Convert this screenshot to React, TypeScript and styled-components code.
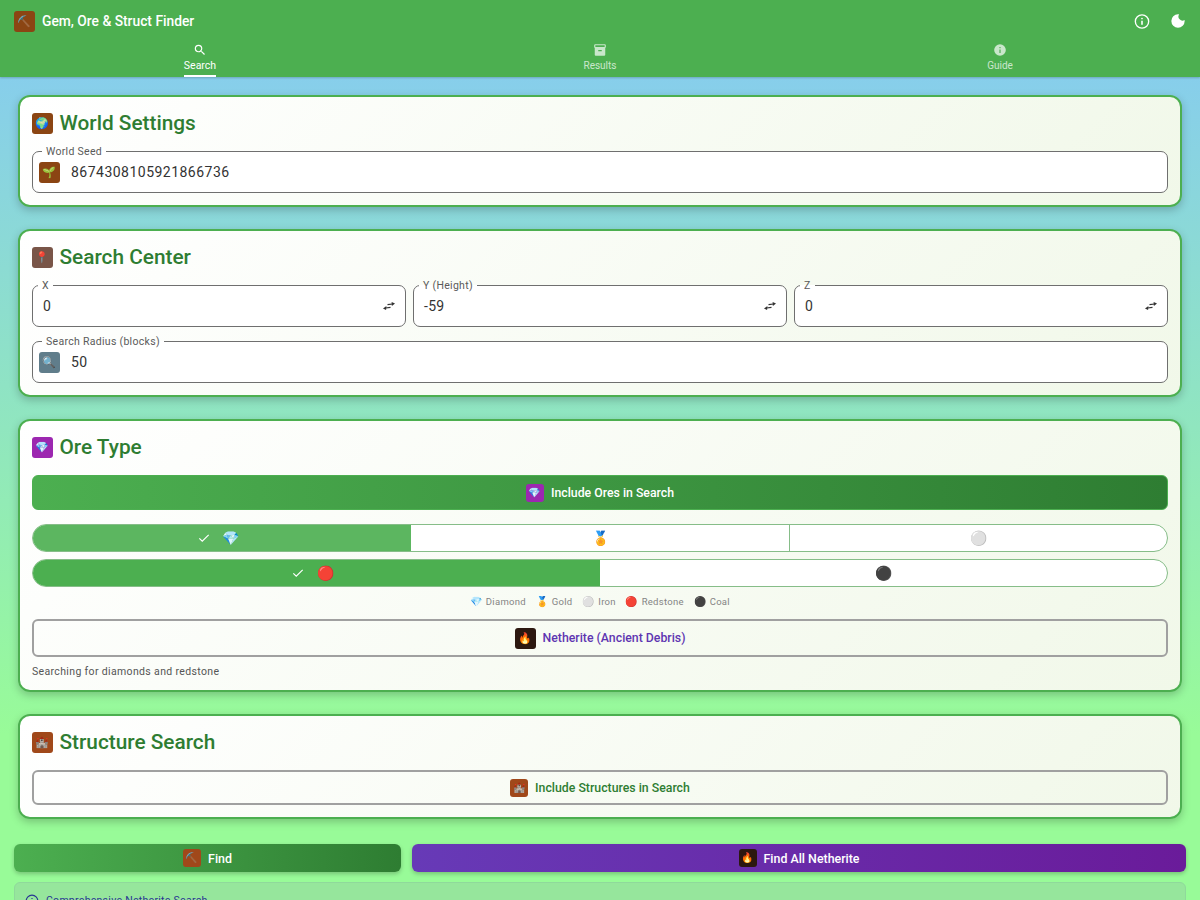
import React from "react";
import styled, { createGlobalStyle } from "styled-components";

const Global = createGlobalStyle`
  html, body { margin: 0; padding: 0; height: 900px; overflow: hidden; }
  body { font-family: Roboto, "Noto Sans", sans-serif; color: #212121; }
  * { box-sizing: border-box; }
`;

const Page = styled.div`
  display: flex;
  flex-direction: column;
  height: 900px;
  overflow: hidden;
`;

const Header = styled.header`
  background: #4caf50;
  height: 77px;
  flex: none;
  display: flex;
  flex-direction: column;
  box-shadow: 0 1px 2px rgba(0, 0, 0, 0.2);
  position: relative;
  z-index: 2;
`;

const TopBar = styled.div`
  height: 42px;
  flex: none;
  padding: 0 14px;
  display: flex;
  align-items: center;
  gap: 7px;
`;

const AppTitle = styled.div`
  flex: 1;
  color: #fff;
  font-size: 13.8px;
  font-weight: 500;
`;

const HeaderButton = styled.div`
  width: 16px;
  height: 16px;
  margin-left: 13px;
  display: flex;
  align-items: center;
  justify-content: center;
`;

const Tabs = styled.nav`
  flex: 1;
  display: grid;
  grid-template-columns: repeat(3, 1fr);
`;

const Tab = styled.div<{ $active?: boolean }>`
  display: flex;
  flex-direction: column;
  align-items: center;
  color: #fff;
  opacity: ${(p) => (p.$active ? 1 : 0.7)};
  font-size: ${(p) => (p.$active ? 10.5 : 10)}px;
  line-height: 12px;
  padding-top: 1px;
`;

const TabLabel = styled.span<{ $active?: boolean }>`
  margin-top: 3px;
  padding-bottom: 1px;
  height: 17px;
  border-bottom: 2px solid ${(p) => (p.$active ? "#fff" : "transparent")};
`;

const Main = styled.main`
  flex: 1;
  min-height: 0;
  overflow: hidden;
  padding: 18px 14px 0;
  background: linear-gradient(180deg, #87ceeb 0%, #98fb98 80%, #98fb98 100%);
`;

const Card = styled.section`
  margin: 0 4px 22.5px;
  padding: 12px 12px 11.5px;
  border: 2px solid #4caf50;
  border-radius: 12px;
  background: linear-gradient(135deg, #ffffff 0%, #f1f8e9 100%);
  box-shadow: 0 3px 8px rgba(0, 0, 0, 0.22);
`;

const CardTitle = styled.h2`
  margin: 0 0 14px;
  display: flex;
  align-items: center;
  gap: 6.5px;
  height: 28px;
  font-size: 20.8px;
  font-weight: 500;
  color: #2e7d32;
`;

const Emoji = styled.span<{ $bg: string; $size?: number }>`
  flex: none;
  width: ${(p) => p.$size ?? 21}px;
  height: ${(p) => p.$size ?? 21}px;
  background: ${(p) => p.$bg};
  border-radius: 3px;
  display: inline-flex;
  align-items: center;
  justify-content: center;
  font-size: ${(p) => ((p.$size ?? 21) >= 21 ? 11 : 10)}px;
  line-height: 1;
  font-family: "Noto Color Emoji", sans-serif;
  font-weight: 400;
`;

const Field = styled.div`
  position: relative;
  flex: 1;
  height: 42px;
  border: 1px solid #6f6f6f;
  border-radius: 7px;
  background: #fff;
  display: flex;
  align-items: center;
  padding: 0 6px;
  gap: 11px;
`;

const FieldLabel = styled.span<{ $adorned?: boolean }>`
  position: absolute;
  top: -6px;
  left: ${(p) => (p.$adorned ? 9 : 5)}px;
  padding: 0 4px;
  background: linear-gradient(180deg, transparent 0 5px, #fff 5px);
  font-size: 10.5px;
  line-height: 12px;
  letter-spacing: 0.3px;
  color: #5a5a5a;
`;

const FieldValue = styled.span<{ $wide?: boolean; $plain?: boolean }>`
  flex: 1;
  font-size: 14px;
  letter-spacing: ${(p) => (p.$wide ? "0.48px" : "0.3px")};
  color: #333;
  padding-left: ${(p) => (p.$plain ? "4px" : "0")};
`;

const SwapGlyph = styled.svg`
  width: 12px;
  height: 12px;
  margin-right: 4px;
  flex: none;
`;

const FieldRow = styled.div<{ $last?: boolean }>`
  display: flex;
  gap: 7px;
  margin-bottom: ${(p) => (p.$last ? 0 : 14)}px;
`;

const PrimaryToggle = styled.div`
  height: 35px;
  border: 1px solid #4caf50;
  border-radius: 6px;
  background: linear-gradient(90deg, #4caf50 0%, #2e7d32 100%);
  display: flex;
  align-items: center;
  justify-content: center;
  gap: 7px;
  color: #fff;
  font-size: 12.3px;
  font-weight: 500;
  margin-bottom: 14px;
`;

const ChoiceRow = styled.div<{ $cols: number }>`
  display: grid;
  grid-template-columns: repeat(${(p) => p.$cols}, 1fr);
  height: 28px;
  border: 1px solid #86bd88;
  border-radius: 14px;
  overflow: hidden;
  background: #fff;
  margin-bottom: 7px;
`;

const Choice = styled.div<{ $on?: string; $divider?: boolean }>`
  display: flex;
  align-items: center;
  justify-content: center;
  gap: 12px;
  font-size: 14px;
  font-family: "Noto Color Emoji", sans-serif;
  background: ${(p) => p.$on ?? "transparent"};
  padding: ${(p) => (p.$on ? "0 7px 0 0" : "0 0 0 2px")};
  box-shadow: ${(p) => (p.$divider ? "1px 0 0 #86bd88" : "none")};
`;

const Legend = styled.div`
  display: flex;
  justify-content: center;
  gap: 10px;
  height: 14px;
  margin: 0 0 11px;
  align-items: center;
  font-size: 9.5px;
  letter-spacing: 0.3px;
  color: #848484;
`;

const LegendItem = styled.span`
  display: inline-flex;
  align-items: center;
  gap: 3px;
`;

const LegendEmoji = styled.span`
  font-family: "Noto Color Emoji", sans-serif;
  font-size: 10px;
`;

const OutlineToggle = styled.div<{ $color: string; $height: number }>`
  height: ${(p) => p.$height}px;
  border: 2px solid #a0a0a0;
  border-radius: 6px;
  display: flex;
  align-items: center;
  justify-content: center;
  gap: 7px;
  color: ${(p) => p.$color};
  font-size: 12.3px;
  font-weight: 500;
`;

const Caption = styled.p`
  margin: 8px 0 0;
  font-size: 10.5px;
  line-height: 13px;
  letter-spacing: 0.35px;
  color: #555;
`;

const Actions = styled.div`
  display: grid;
  grid-template-columns: 387px 1fr;
  gap: 11px;
  margin-top: 25.5px;
`;

const Action = styled.div<{ $from: string; $to: string }>`
  height: 28px;
  border-radius: 6px;
  background: linear-gradient(90deg, ${(p) => p.$from} 0%, ${(p) => p.$to} 100%);
  box-shadow: 0 2px 4px rgba(0, 0, 0, 0.22);
  display: flex;
  align-items: center;
  justify-content: center;
  gap: 7px;
  color: #fff;
  font-size: 12.4px;
  font-weight: 500;
`;

const Alert = styled.div`
  margin-top: 10px;
  height: 60px;
  border: 1px solid #8fd99b;
  border-radius: 6px;
  background: #96e69c;
  padding: 11px 10px;
  display: flex;
  align-items: flex-start;
  gap: 7px;
  font-size: 10.5px;
  line-height: 14px;
  letter-spacing: 0.28px;
  color: #283593;
`;

const InfoIcon = () => (
  <svg width="17" height="17" viewBox="0 0 24 24" fill="none" stroke="#fff" strokeWidth="2">
    <circle cx="12" cy="12" r="10" />
    <path d="M12 11v6" strokeWidth="2.4" />
    <circle cx="12" cy="7.5" r="1.3" fill="#fff" stroke="none" />
  </svg>
);

const Moon = () => (
  <svg width="16" height="16" viewBox="0 0 24 24" fill="#fff">
    <path d="M12 2a10 10 0 1 0 10 10c0-.6-.05-1.1-.14-1.6A6 6 0 0 1 13.6 2.14C13.1 2.05 12.6 2 12 2z" />
  </svg>
);

const SearchIcon = () => (
  <svg width="14" height="14" viewBox="0 0 24 24" fill="#fff">
    <path d="M15.5 14h-.79l-.28-.27A6.47 6.47 0 0 0 16 9.5 6.5 6.5 0 1 0 9.5 16c1.61 0 3.09-.59 4.23-1.57l.27.28v.79l5 4.99L20.49 19l-4.99-5zm-6 0C7.01 14 5 11.99 5 9.5S7.01 5 9.5 5 14 7.01 14 9.5 11.99 14 9.5 14z" />
  </svg>
);

const ArchiveIcon = () => (
  <svg width="14" height="14" viewBox="0 0 24 24" fill="#fff">
    <path fillRule="evenodd" d="M20 2H4c-1 0-2 .9-2 2v3.01c0 .72.43 1.34 1 1.69V20c0 1.1 1.1 2 2 2h14c.9 0 2-.9 2-2V8.7c.57-.35 1-.97 1-1.69V4c0-1.1-1-2-2-2zm-5 12H9v-2h6v2zm5-7H4V4h16v3z" />
  </svg>
);

const GuideIcon = () => (
  <svg width="14" height="14" viewBox="0 0 24 24">
    <path fill="#fff" fillRule="evenodd" d="M12 2a10 10 0 1 0 0 20 10 10 0 0 0 0-20zm-1 15h2v-6h-2v6zm0-8h2V7h-2v2z" />
  </svg>
);

const Swap = () => (
  <SwapGlyph viewBox="0 0 12 12" fill="#333" stroke="#333" strokeWidth="1.1">
    <path d="M4.5 4.6 9.5 4" fill="none" />
    <path d="M8.6 1.9 12 3.6 8.9 5.9z" stroke="none" />
    <path d="M7.5 7.4 2.5 8" fill="none" />
    <path d="M3.4 6.1 0 8.4l3.1 1.7z" stroke="none" />
  </SwapGlyph>
);

const Check = () => (
  <svg width="14" height="14" viewBox="0 0 24 24" fill="none" stroke="#fff" strokeWidth="2">
    <path d="M4 12.5l5 5L20 6.5" />
  </svg>
);

export default function App() {
  return (
    <Page>
      <Global />
      <Header>
        <TopBar>
          <Emoji $bg="#8b4513">⛏️</Emoji>
          <AppTitle>Gem, Ore &amp; Struct Finder</AppTitle>
          <HeaderButton><InfoIcon /></HeaderButton>
          <HeaderButton><Moon /></HeaderButton>
        </TopBar>
        <Tabs>
          <Tab $active><SearchIcon /><TabLabel $active>Search</TabLabel></Tab>
          <Tab><ArchiveIcon /><TabLabel>Results</TabLabel></Tab>
          <Tab><GuideIcon /><TabLabel>Guide</TabLabel></Tab>
        </Tabs>
      </Header>
      <Main>
        <Card>
          <CardTitle><Emoji $bg="#8b4513">🌍</Emoji>World Settings</CardTitle>
          <FieldRow $last>
            <Field>
              <FieldLabel $adorned>World Seed</FieldLabel>
              <Emoji $bg="#8b4513">🌱</Emoji>
              <FieldValue $wide>8674308105921866736</FieldValue>
            </Field>
          </FieldRow>
        </Card>
        <Card>
          <CardTitle><Emoji $bg="#795548">📍</Emoji>Search Center</CardTitle>
          <FieldRow>
            <Field><FieldLabel>X</FieldLabel><FieldValue $plain>0</FieldValue><Swap /></Field>
            <Field><FieldLabel>Y (Height)</FieldLabel><FieldValue $plain>-59</FieldValue><Swap /></Field>
            <Field><FieldLabel>Z</FieldLabel><FieldValue $plain>0</FieldValue><Swap /></Field>
          </FieldRow>
          <FieldRow $last>
            <Field>
              <FieldLabel $adorned>Search Radius (blocks)</FieldLabel>
              <Emoji $bg="#607d8b">🔍</Emoji>
              <FieldValue>50</FieldValue>
            </Field>
          </FieldRow>
        </Card>
        <Card>
          <CardTitle><Emoji $bg="#9c27b0">💎</Emoji>Ore Type</CardTitle>
          <PrimaryToggle><Emoji $bg="#9c27b0" $size={18}>💎</Emoji>Include Ores in Search</PrimaryToggle>
          <ChoiceRow $cols={3}>
            <Choice $on="#5cb660"><Check />💎</Choice>
            <Choice $divider>🏅</Choice>
            <Choice>⚪</Choice>
          </ChoiceRow>
          <ChoiceRow $cols={2}>
            <Choice $on="#4caf50"><Check />🔴</Choice>
            <Choice>⚫</Choice>
          </ChoiceRow>
          <Legend>
            <LegendItem><LegendEmoji>💎</LegendEmoji>Diamond</LegendItem>
            <LegendItem><LegendEmoji>🏅</LegendEmoji>Gold</LegendItem>
            <LegendItem><LegendEmoji>⚪</LegendEmoji>Iron</LegendItem>
            <LegendItem><LegendEmoji>🔴</LegendEmoji>Redstone</LegendItem>
            <LegendItem><LegendEmoji>⚫</LegendEmoji>Coal</LegendItem>
          </Legend>
          <OutlineToggle $color="#5e35b1" $height={38}><Emoji $bg="#2c1810">🔥</Emoji>Netherite (Ancient Debris)</OutlineToggle>
          <Caption>Searching for diamonds and redstone</Caption>
        </Card>
        <Card>
          <CardTitle><Emoji $bg="#a0481a">🏰</Emoji>Structure Search</CardTitle>
          <OutlineToggle $color="#2e7d32" $height={35}><Emoji $bg="#a0481a" $size={18}>🏰</Emoji>Include Structures in Search</OutlineToggle>
        </Card>
        <Actions>
          <Action $from="#4caf50" $to="#2e7d32"><Emoji $bg="#a0481a" $size={18}>⛏️</Emoji>Find</Action>
          <Action $from="#673ab7" $to="#6a1b9a"><Emoji $bg="#2c1810" $size={18}>🔥</Emoji>Find All Netherite</Action>
        </Actions>
        <Alert>
          <svg width="14" height="14" viewBox="0 0 24 24" fill="none" stroke="#283593" strokeWidth="2"><circle cx="12" cy="12" r="10" /><path d="M12 11v6M12 7v1.5" /></svg>
          Comprehensive Netherite Search
        </Alert>
      </Main>
    </Page>
  );
}
